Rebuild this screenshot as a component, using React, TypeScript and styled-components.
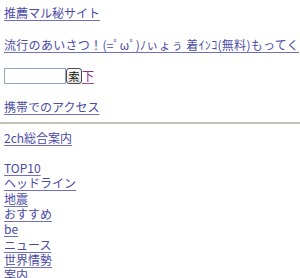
import styled, { createGlobalStyle } from "styled-components";

const GlobalStyle = createGlobalStyle`
    html, body {
        margin: 0;
        padding: 0;
        background: #fff;
        overflow: hidden;
    }
`;

const Page = styled.div`
    padding: 5px 4px 0;
    font-family: "Noto Sans CJK JP", "Noto Sans", sans-serif;
    font-size: 12px;
    line-height: 15.3px;
    color: #4b4ba6;
    white-space: nowrap;
`;

const Line = styled.div<{ $gap?: number; $spread?: boolean }>`
    height: 15.3px;
    margin-bottom: ${(p) => p.$gap ?? 0}px;
    letter-spacing: ${(p) => (p.$spread ? "0.3px" : "normal")};
`;

const Link = styled.a<{ $visited?: boolean }>`
    color: ${(p) => (p.$visited ? "#8b2d8b" : "#4b4ba6")};
    text-decoration: underline;
    text-underline-offset: 2px;
    text-decoration-color: ${(p) => (p.$visited ? "#9a4c9a" : "#7070c0")};
`;

const SearchRow = styled.form`
    display: flex;
    align-items: center;
    height: 16px;
    margin: 0 0 15px;
`;

const SearchInput = styled.input`
    box-sizing: border-box;
    width: 62px;
    height: 16px;
    margin: 0;
    padding: 0 2px;
    border: 1px solid #8ea6c4;
    background: #fff;
    outline: none;
`;

const SearchButton = styled.button`
    box-sizing: border-box;
    width: 16px;
    height: 16px;
    margin: 0;
    padding: 0;
    border: 1px solid #4a4a5a;
    border-radius: 3px;
    background: linear-gradient(#fafaf6, #e4e2d8);
    font-family: "Noto Sans CJK JP", sans-serif;
    font-size: 11px;
    line-height: 14px;
    color: #111;
`;

const Rule = styled.hr`
    height: 2px;
    margin: 8px -4px 6px;
    border: none;
    background: #c3c1b6;
`;

const menu = ["TOP10", "ヘッドライン", "地震", "おすすめ", "be", "ニュース", "世界情勢", "案内"];

export default function App() {
    return (
        <>
            <GlobalStyle />
            <Page>
                <Line $gap={17}>
                    <Link href="#">推薦マル秘サイト</Link>
                </Line>
                <Line $gap={15} $spread>
                    <Link href="#">流行のあいさつ！(=ﾟωﾟ)ﾉぃょぅ 着ｲﾝｺ(無料)もってく</Link>
                </Line>
                <SearchRow onSubmit={(e) => e.preventDefault()}>
                    <SearchInput type="text" />
                    <SearchButton type="submit">索</SearchButton>
                    <Link href="#" $visited>下</Link>
                </SearchRow>
                <Line>
                    <Link href="#">携帯でのアクセス</Link>
                </Line>
                <Rule />
                <Line $gap={15}>
                    <Link href="#">2ch総合案内</Link>
                </Line>
                {menu.map((m) => (
                    <Line key={m}>
                        <Link href="#">{m}</Link>
                    </Line>
                ))}
            </Page>
        </>
    );
}
